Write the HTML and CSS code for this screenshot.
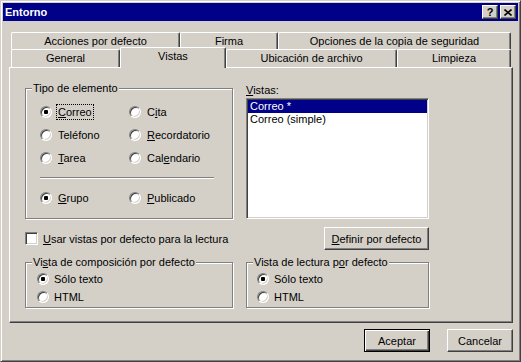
FILE: index.html
```html
<!DOCTYPE html>
<html lang="es">
<head>
    <meta charset="UTF-8">
    <title>Entorno</title>
    <link rel="stylesheet" href="styles.css">
</head>
<body>
    <div class="window">
        <div class="titlebar">
            <span class="title">Entorno</span>
            <div class="title-buttons">
                <span class="tbtn help">?</span>
                <span class="tbtn close">
                    <svg width="8" height="7" viewBox="0 0 8 7"><path d="M0.5 0.5 L7.5 6.5 M7.5 0.5 L0.5 6.5" stroke="#000" stroke-width="1.6" fill="none"/></svg>
                </span>
            </div>
        </div>

        <div class="tabs">
            <div class="tab-row back">
                <div class="tab tab-acciones">Acciones por defecto</div>
                <div class="tab tab-firma">Firma</div>
                <div class="tab tab-opciones">Opciones de la copia de seguridad</div>
            </div>
            <div class="tab-row front">
                <div class="tab tab-general">General</div>
                <div class="tab tab-vistas active">Vistas</div>
                <div class="tab tab-ubicacion">Ubicación de archivo</div>
                <div class="tab tab-limpieza">Limpieza</div>
            </div>
        </div>

        <div class="panel">
            <div class="panel-grid">
                <fieldset class="group">
                    <legend>Tipo de elemento</legend>
                    <div class="tipo-body">
                        <div class="radio-grid">
                            <span class="radio"><span class="dot checked"></span><span class="lbl focus"><u>C</u>orreo</span></span>
                            <span class="radio"><span class="dot"></span><span class="lbl">C<u>i</u>ta</span></span>
                            <span class="radio"><span class="dot"></span><span class="lbl">Teléfono</span></span>
                            <span class="radio"><span class="dot"></span><span class="lbl"><u>R</u>ecordatorio</span></span>
                            <span class="radio"><span class="dot"></span><span class="lbl"><u>T</u>area</span></span>
                            <span class="radio"><span class="dot"></span><span class="lbl">Cal<u>e</u>ndario</span></span>
                        </div>
                        <div class="separator"></div>
                        <div class="radio-grid">
                            <span class="radio"><span class="dot checked"></span><span class="lbl"><u>G</u>rupo</span></span>
                            <span class="radio"><span class="dot"></span><span class="lbl"><u>P</u>ublicado</span></span>
                        </div>
                    </div>
                </fieldset>

                <div class="vistas">
                    <div class="vistas-label"><u>V</u>istas:</div>
                    <div class="listbox">
                        <div class="item selected">Correo *</div>
                        <div class="item">Correo (simple)</div>
                    </div>
                </div>

                <label class="check-row">
                    <span class="checkbox"></span>
                    <span class="lbl"><u>U</u>sar vistas por defecto para la lectura</span>
                </label>

                <div class="define">
                    <button class="btn btn-define"><u>D</u>efinir por defecto</button>
                </div>

                <fieldset class="group small comp">
                    <legend>Vi<u>s</u>ta de composición por defecto</legend>
                    <div class="small-body">
                        <span class="radio"><span class="dot checked"></span><span class="lbl">Sólo texto</span></span>
                        <span class="radio"><span class="dot"></span><span class="lbl">HTML</span></span>
                    </div>
                </fieldset>

                <fieldset class="group small lect">
                    <legend>Vista de lectura p<u>o</u>r defecto</legend>
                    <div class="small-body">
                        <span class="radio"><span class="dot checked"></span><span class="lbl">Sólo texto</span></span>
                        <span class="radio"><span class="dot"></span><span class="lbl">HTML</span></span>
                    </div>
                </fieldset>
            </div>
        </div>

        <div class="footer">
            <button class="btn btn-default">Aceptar</button>
            <button class="btn">Cancelar</button>
        </div>
    </div>
</body>
</html>
```

FILE: styles.css
```css
body {
    margin: 0;
    background-color: #d4d0c8;
    font-family: "Liberation Sans", Arial, sans-serif;
    font-size: 11px;
    color: #000;
}

u {
    text-decoration: underline;
    text-underline-offset: 1px;
}

.window {
    width: 521px;
    height: 362px;
    box-sizing: border-box;
    border: 1px solid;
    border-color: #d4d0c8 #404040 #404040 #d4d0c8;
    box-shadow: inset 1px 1px #fff, inset -1px -1px #808080;
    padding: 2px;
    background-color: #d4d0c8;
}

/* Title bar */
.titlebar {
    height: 18px;
    background-color: #000088;
    display: flex;
    align-items: flex-start;
}

.title {
    color: #fff;
    font-weight: bold;
    line-height: 18px;
    padding-left: 2px;
}

.title-buttons {
    margin-left: auto;
    margin-top: 2px;
    margin-right: 2px;
    display: flex;
    gap: 2px;
}

.tbtn {
    width: 16px;
    height: 14px;
    box-sizing: border-box;
    background-color: #d4d0c8;
    border: 1px solid;
    border-color: #fff #404040 #404040 #fff;
    box-shadow: inset -1px -1px #808080;
    display: flex;
    align-items: center;
    justify-content: center;
}

.help {
    font-weight: bold;
    font-size: 11px;
    line-height: 12px;
}

/* Tabs */
.tabs {
    margin-top: 11px;
    padding-left: 8px;
}

.tab-row {
    display: flex;
    align-items: flex-start;
}

.tab {
    box-sizing: border-box;
    height: 18px;
    line-height: 17px;
    text-align: center;
    background-color: #d4d0c8;
    border-top: 1px solid #fff;
    border-left: 1px solid #fff;
    border-right: 1px solid #404040;
    border-radius: 2px 2px 0 0;
    box-shadow: inset -1px 0 #808080;
    white-space: nowrap;
}

.back .tab {
    height: 17px;
    line-height: 16px;
}

.tab.active {
    height: 21px;
    margin-top: -2px;
    margin-bottom: -1px;
    position: relative;
    z-index: 1;
}

.tab-acciones { width: 169px; }
.tab-firma { width: 98px; }
.tab-opciones { width: 233px; }
.tab-general { width: 109px; }
.tab-vistas { width: 106px; }
.tab-ubicacion { width: 171px; }
.tab-limpieza { width: 114px; }

/* Tab page */
.panel {
    margin-left: 6px;
    width: 504px;
    height: 256px;
    box-sizing: border-box;
    border: 1px solid;
    border-color: #fff #404040 #404040 #fff;
    box-shadow: inset -1px -1px #808080;
    padding: 14px 0 0 15px;
}

.panel-grid {
    display: grid;
    grid-template-columns: 208px 183px;
    column-gap: 13px;
}

/* Group boxes */
.group {
    margin: 0;
    padding: 0;
    min-width: 0;
    border: 1px solid #808080;
    box-shadow: inset 1px 1px #fff, 1px 1px #fff;
}

.group legend {
    margin-left: 6px;
    padding: 0 1px;
    line-height: 13px;
    background-color: #d4d0c8;
    white-space: nowrap;
}

.tipo-body {
    padding: 5px 0 8px 14px;
}

.radio-grid {
    display: grid;
    grid-template-columns: 89px auto;
    grid-auto-rows: 23px;
    align-items: center;
}

.separator {
    width: 174px;
    height: 1px;
    margin: 8px 0 7px;
    border-bottom: 1px solid #fff;
    background-color: #808080;
}

.radio {
    display: inline-flex;
    align-items: center;
    white-space: nowrap;
}

.dot {
    width: 12px;
    height: 12px;
    box-sizing: border-box;
    flex-shrink: 0;
    border-radius: 50%;
    border: 1px solid;
    border-color: #808080 #fff #fff #808080;
    box-shadow: inset 1px 1px #404040, inset -1px -1px #d4d0c8;
    background-color: #fff;
    display: flex;
    align-items: center;
    justify-content: center;
}

.dot.checked::after {
    content: "";
    width: 4px;
    height: 4px;
    border-radius: 1px;
    background-color: #000;
}

.lbl {
    margin-left: 5px;
    padding: 0 1px;
    line-height: 14px;
}

.focus {
    outline: 1px dotted #000;
}

/* Views list */
.vistas-label {
    height: 16px;
    box-sizing: border-box;
    padding-top: 2px;
    line-height: 13px;
}

.listbox {
    height: 121px;
    box-sizing: border-box;
    border: 1px solid;
    border-color: #808080 #fff #fff #808080;
    box-shadow: inset 1px 1px #404040, inset -1px -1px #d4d0c8;
    background-color: #fff;
    padding: 1px;
}

.item {
    line-height: 13px;
    padding-left: 2px;
    white-space: nowrap;
}

.item.selected {
    background-color: #000088;
    color: #fff;
}

/* Second row */
.check-row {
    margin-top: 8px;
    height: 23px;
    display: flex;
    align-items: center;
}

.checkbox {
    width: 13px;
    height: 13px;
    box-sizing: border-box;
    border: 1px solid;
    border-color: #808080 #fff #fff #808080;
    box-shadow: inset 1px 1px #404040, inset -1px -1px #d4d0c8;
    background-color: #fff;
}

.check-row .lbl {
    margin-left: 4px;
}

.define {
    margin-top: 8px;
    display: flex;
    justify-content: flex-end;
}

/* Buttons */
.btn {
    font-family: inherit;
    font-size: 11px;
    color: #000;
    height: 23px;
    width: 66px;
    padding: 0;
    box-sizing: border-box;
    background-color: #d4d0c8;
    border: 1px solid;
    border-color: #fff #404040 #404040 #fff;
    box-shadow: inset -1px -1px #808080;
    border-radius: 0;
}

.btn-define {
    width: 105px;
}

.btn-default {
    border: 1px solid #000;
    box-shadow: inset 1px 1px #fff, inset -1px -1px #404040, inset -2px -2px #808080;
}

/* Bottom group boxes */
.small {
    margin-top: 6px;
}

.small-body {
    padding: 1px 0 1px 11px;
    display: flex;
    flex-direction: column;
}

.lect .small-body {
    padding-left: 10px;
}

.small-body .radio {
    height: 18px;
}

.small-body .lbl {
    margin-left: 4px;
}

.footer {
    margin-top: 6px;
    padding-right: 5px;
    display: flex;
    justify-content: flex-end;
    gap: 17px;
}
```
